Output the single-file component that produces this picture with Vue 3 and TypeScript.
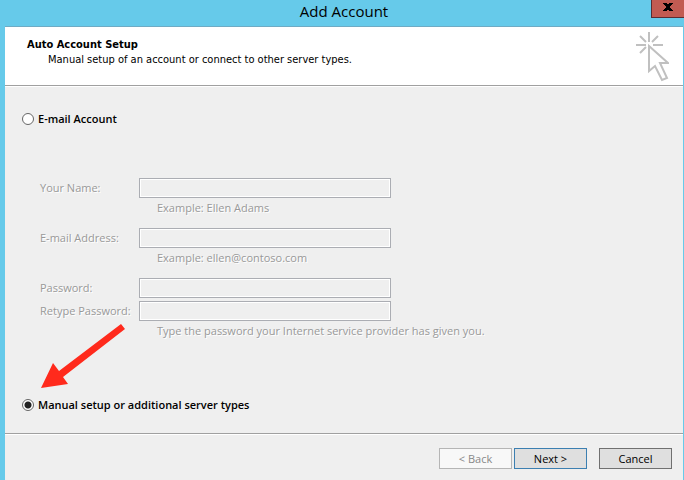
<script setup lang="ts">
import { ref } from 'vue'

interface Field {
  id: string
  label: string
  type: string
  hint?: string
}

const mode = ref<'email' | 'manual'>('manual')

const fields: Field[] = [
  { id: 'name', label: 'Your Name:', type: 'text', hint: 'Example: Ellen Adams' },
  { id: 'address', label: 'E-mail Address:', type: 'text', hint: 'Example: ellen@contoso.com' },
  { id: 'password', label: 'Password:', type: 'password' },
  { id: 'retype', label: 'Retype Password:', type: 'password', hint: 'Type the password your Internet service provider has given you.' },
]
</script>

<template>
  <div class="window">
    <div class="titlebar">
      <h1>Add Account</h1>
      <button class="close" type="button" aria-label="Close">
        <svg width="10" height="8" viewBox="0 0 10 8" shape-rendering="crispEdges">
          <path d="M0 0H4V1H6V0H10V1H9V2H8V3H7V5H8V6H9V7H10V8H6V7H4V8H0V7H1V6H2V5H3V3H2V2H1V1H0Z" />
        </svg>
      </button>
    </div>

    <header class="banner">
      <div>
        <h2>Auto Account Setup</h2>
        <p>Manual setup of an account or connect to other server types.</p>
      </div>
      <svg class="cursor" width="34" height="50" viewBox="0 0 34 50">
        <path d="M14 0V10M1 13H11M18 13H28M5 4L11 10M23 4L17 10M5 21L11 15" />
        <path d="M14 14V39L20 34L27 48L32 46L25 31H33Z" />
      </svg>
    </header>

    <form @submit.prevent>
      <main>
        <label class="choice"><input v-model="mode" type="radio" name="mode" value="email" /><span>E-mail Account</span></label>
        <div class="fields">
          <div v-for="f in fields" :key="f.id" class="field" :class="{ spaced: f.id !== 'retype' }">
            <label :for="f.id">{{ f.label }}</label>
            <input :id="f.id" :type="f.type" :disabled="mode === 'manual'" />
            <p v-if="f.hint">{{ f.hint }}</p>
          </div>
        </div>
        <label class="choice"><input v-model="mode" type="radio" name="mode" value="manual" /><span>Manual setup or additional server types</span></label>
        <svg class="pointer" width="86" height="66" viewBox="0 0 86 66">
          <path d="M81 0L85 5L23 53L28 60L1 64L13 39L19 47Z" />
        </svg>
      </main>

      <footer>
        <button type="button" disabled>&lt; Back</button>
        <button class="next" type="submit">Next &gt;</button>
        <button class="cancel" type="button">Cancel</button>
      </footer>
    </form>
  </div>
</template>

<style>
body {
  background: #efefef;
}
</style>

<style scoped>
.window {
  box-sizing: border-box;
  display: flex;
  flex-direction: column;
  min-height: 100vh;
  border-left: 5px solid #66caea;
  border-right: 1px solid #66caea;
  background: #efefef;
  color: #000;
  font: 11px/20px "Open Sans", "Noto Sans", sans-serif;
}

h1,
h2,
p {
  margin: 0;
}

.titlebar {
  position: relative;
  box-sizing: border-box;
  height: 27px;
  border-bottom: 1px solid #6fabc4;
  background: #66caea;
}

h1 {
  font-size: 15px;
  font-weight: 400;
  line-height: 23px;
  text-align: center;
}

.close {
  position: absolute;
  top: 0;
  right: -1px;
  display: flex;
  align-items: center;
  justify-content: center;
  box-sizing: border-box;
  width: 33px;
  height: 18px;
  padding: 0 0 3px;
  border: 1px solid #5a2d33;
  border-width: 0 0 1px 1px;
  background: #c25b52;
}

.banner {
  display: flex;
  justify-content: space-between;
  box-sizing: border-box;
  height: 59px;
  padding: 5px 14px 0 22px;
  border-bottom: 1px solid #a0a0a0;
  background: #fff;
  font-family: "DejaVu Sans Condensed", "DejaVu Sans", sans-serif;
  line-height: 15px;
}

.banner > div {
  padding-top: 5px;
}

h2 {
  font-size: 11px;
  font-weight: 700;
}

.banner p {
  padding-left: 21px;
}

.cursor {
  fill: none;
  stroke: #c0c0c0;
  stroke-width: 2;
}

form {
  display: flex;
  flex: 1;
  flex-direction: column;
  border-top: 1px solid #fff;
}

main {
  position: relative;
  flex: 1;
  padding: 21px 17px 18px;
}

.choice {
  display: flex;
  align-items: center;
  gap: 4px;
  font-weight: 600;
}

.choice span {
  padding-top: 1px;
}

.choice input {
  box-sizing: border-box;
  width: 12px;
  height: 12px;
  margin: 0;
  border: 1px solid #666;
  border-radius: 50%;
  appearance: none;
  background: #fff;
}

.choice input:checked {
  background: radial-gradient(circle, #222 3px, #fff 4px);
}

.fields {
  padding: 49px 0 53px 18px;
}

.field {
  display: grid;
  grid-template-columns: 99px minmax(0, 252px);
  color: #999;
  text-shadow: 1px 1px #fff;
}

.field.spaced + .field.spaced {
  margin-top: 10px;
}

.field:last-child {
  margin-top: 3px;
}

.field input {
  box-sizing: border-box;
  width: 100%;
  height: 20px;
  padding: 0 4px;
  border: 1px solid #abadb3;
  outline: 1px solid #fff;
  outline-offset: -2px;
  background: #efefef;
  font: inherit;
}

.field p {
  grid-column: 2;
  padding-left: 18px;
  white-space: nowrap;
}

.pointer {
  position: absolute;
  top: 237px;
  left: 35px;
  fill: #ff2a1c;
  pointer-events: none;
}

footer {
  display: flex;
  justify-content: flex-end;
  gap: 2px;
  padding: 14px 11px 11px;
  border-top: 1px solid #a0a0a0;
  box-shadow: inset 0 1px #fff;
}

footer button {
  box-sizing: border-box;
  width: 73px;
  height: 21px;
  padding: 0;
  border: 1px solid #707070;
  background: #dfdfdf;
  color: #000;
  font: inherit;
  line-height: 19px;
}

footer button:disabled {
  border-color: #b5b5b5;
  background: #f8f8f8;
  color: #888;
}

footer .next {
  border-color: #3c7fb1;
}

footer .cancel {
  margin-left: 10px;
}
</style>
